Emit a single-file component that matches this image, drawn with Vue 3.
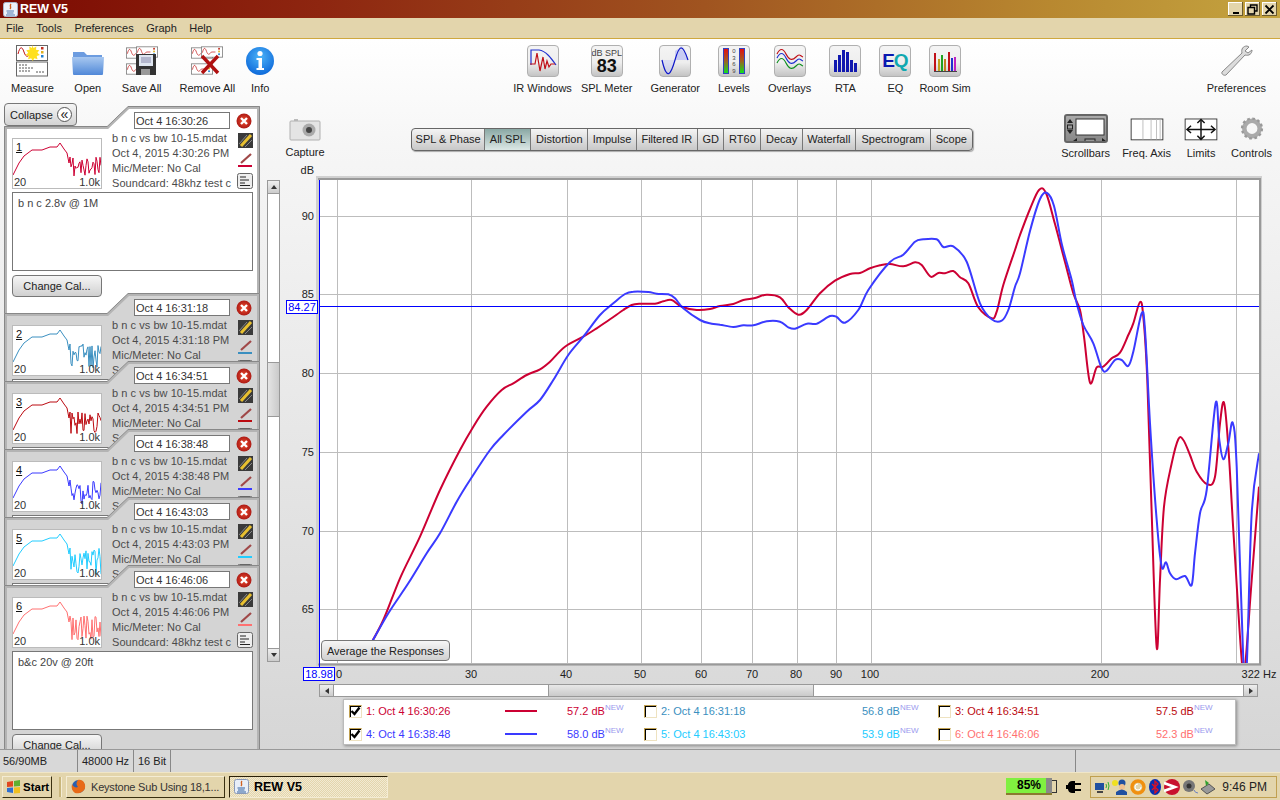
<template>
  <div class="app">
    <svg class="defs" width="0" height="0">
      <defs>
        <radialGradient id="infoBlue" cx="0.5" cy="0.35" r="0.7">
          <stop offset="0" stop-color="#4cb4f8" />
          <stop offset="1" stop-color="#0a64d8" />
        </radialGradient>
        <radialGradient id="closeRed" cx="0.5" cy="0.5" r="0.6">
          <stop offset="0" stop-color="#f05030" />
          <stop offset="1" stop-color="#a01010" />
        </radialGradient>
        <linearGradient id="folderBlue" x1="0" y1="0" x2="0" y2="1">
          <stop offset="0" stop-color="#a8c8f0" />
          <stop offset="1" stop-color="#5088d8" />
        </linearGradient>
        <symbol id="sheet" viewBox="0 0 32 16">
          <rect x="0.5" y="0.5" width="31" height="15" fill="#fff" stroke="#666" />
          <path d="M2 9 C4 1 6 1 8 7 S12 12 15 8 L21 8" fill="none" stroke="#c01010" />
          <rect x="25" y="2" width="2.5" height="2.5" fill="#c03020" />
          <rect x="25" y="6" width="2.5" height="2.5" fill="#e0b020" />
          <rect x="25" y="10" width="2.5" height="2.5" fill="#2080d0" />
        </symbol>
      </defs>
    </svg>

    <div class="titlebar">
      <svg class="java" width="15" height="15" viewBox="0 0 15 15">
        <rect x="0.5" y="0.5" width="14" height="14" rx="2" fill="#eef2fa" stroke="#a8b4cc" />
        <path d="M8 2 C6 4 9 5 7 7" fill="none" stroke="#d06020" stroke-width="1.4" />
        <path d="M3.5 9 H11 M4 11 H10.5 M3 13 H12" stroke="#5078b0" />
      </svg>
      <span class="app-name">REW V5</span>
      <div class="win-btns">
        <span class="win-btn"><i class="w-min"></i></span>
        <span class="win-btn">
          <svg width="11" height="11" viewBox="0 0 11 11"><path d="M3.5 3V1H10V7H8M1 3.5H7.5V10H1Z" fill="none" stroke="#000" stroke-width="1.4" /></svg>
        </span>
        <span class="win-btn">
          <svg width="11" height="11" viewBox="0 0 11 11"><path d="M1.5 1.5L9.5 9.5M9.5 1.5L1.5 9.5" stroke="#000" stroke-width="1.8" /></svg>
        </span>
      </div>
    </div>

    <div class="menubar">
      <span v-for="m in menus" :key="m">{{ m }}</span>
    </div>

    <div class="workspace">
      <div class="toolbar">
        <div class="tool-group left-tools">
          <div class="tool">
            <svg width="32" height="32" viewBox="0 0 32 32">
              <use href="#sheet" x="0" y="0" width="32" height="16" />
              <rect x="0.5" y="17" width="31" height="14" fill="#fff" stroke="#666" />
              <path d="M3 20H12M3 23H17M3 26H14M20 27H28" stroke="#555" stroke-dasharray="2 1" />
              <path d="M16 -1l1.6 3.2 3-1.6-.4 3.5 3.5.4-2 2.8 2.6 2.3-3.3 1 .8 3.4-3.3-1-1.7 3-1.7-3-3.3 1 .8-3.4-3.3-1 2.6-2.3-2-2.8 3.5-.4-.4-3.5 3 1.6z" fill="#ffe020" transform="translate(1 1) scale(.94)" />
            </svg>
            <span>Measure</span>
          </div>
          <div class="tool">
            <svg width="32" height="32" viewBox="0 0 32 32">
              <path d="M1 7 H12 L15 10 H30 V14 H1Z" fill="#6c9ce0" />
              <path d="M0 12 H32 L31 29 Q31 30 30 30 H2 Q1 30 1 29Z" fill="url(#folderBlue)" />
            </svg>
            <span>Open</span>
          </div>
          <div class="tool">
            <svg width="32" height="32" viewBox="0 0 32 32">
              <use href="#sheet" x="0" y="1" width="22" height="14" />
              <use href="#sheet" x="0" y="17" width="22" height="14" />
              <use href="#sheet" x="10" y="0" width="22" height="14" />
              <rect x="10" y="9" width="20" height="21" fill="#333" />
              <rect x="13" y="10" width="14" height="11" fill="#dfe6f0" />
              <path d="M15 13H25M15 15H25M15 17H25" stroke="#88a" />
              <rect x="15" y="24" width="9" height="6" fill="#999" />
            </svg>
            <span>Save All</span>
          </div>
          <div class="tool">
            <svg width="32" height="32" viewBox="0 0 32 32">
              <use href="#sheet" x="0" y="1" width="22" height="14" />
              <use href="#sheet" x="0" y="17" width="22" height="14" />
              <use href="#sheet" x="10" y="0" width="22" height="14" />
              <path d="M11 11L27 28M27 11L11 28" stroke="#b01010" stroke-width="3.4" />
            </svg>
            <span>Remove All</span>
          </div>
          <div class="tool info-tool">
            <svg width="32" height="32" viewBox="0 0 32 32">
              <circle cx="16" cy="16" r="14" fill="url(#infoBlue)" />
              <circle cx="16" cy="8.5" r="2.6" fill="#fff" />
              <path d="M12.5 13H18V23H20V25H12.5V23H14.5V15H12.5Z" fill="#fff" />
            </svg>
            <span>Info</span>
          </div>
        </div>

        <div class="tool-group center-tools">
          <div class="tool">
            <div class="icon-btn">
              <svg width="32" height="32" viewBox="0 0 32 32">
                <path d="M4 20V5H12C19 6 24 13 29 20" fill="none" stroke="#2030d0" stroke-width="1.2" />
                <path d="M3 19H8L10 8L13 26L16 12L18 24L20 16L22 22L24 19H28" fill="none" stroke="#c01018" stroke-width="1.2" />
              </svg>
            </div>
            <span>IR Windows</span>
          </div>
          <div class="tool spl-tool">
            <div class="icon-btn spl-btn">
              <span class="spl-unit">dB SPL</span>
              <span class="spl-val">83</span>
            </div>
            <span>SPL Meter</span>
          </div>
          <div class="tool">
            <div class="icon-btn">
              <svg width="32" height="32" viewBox="0 0 32 32">
                <path d="M3 15H16V6C20 3 24 3 29 15Z" fill="#c8ccf4" />
                <path d="M3 15C6 38 12 32 16 15S24 -5 29 15" fill="#c8ccf4" fill-opacity="0.5" />
                <path d="M3 15C8 37 12 29 16 15S23 -3 29 15" fill="none" stroke="#1018c8" stroke-width="1.2" />
              </svg>
            </div>
            <span>Generator</span>
          </div>
          <div class="tool">
            <div class="icon-btn levels-btn">
              <i class="lv-bar"></i>
              <span class="lv-scale"><b>0</b><b>3</b><b>6</b><b>9</b></span>
              <i class="lv-bar"></i>
            </div>
            <span>Levels</span>
          </div>
          <div class="tool">
            <div class="icon-btn">
              <svg width="32" height="32" viewBox="0 0 32 32">
                <path d="M3 9C6 3 9 3 12 9S18 16 22 12 26 11 29 12" fill="none" stroke="#c01018" stroke-width="1.2" />
                <path d="M3 13C6 7 9 7 12 13S18 20 22 16 26 15 29 16" fill="none" stroke="#2030d0" stroke-width="1.2" />
                <path d="M3 18C6 12 9 12 12 18S18 25 22 21 26 20 29 21" fill="none" stroke="#109020" stroke-width="1.2" />
              </svg>
            </div>
            <span>Overlays</span>
          </div>
          <div class="tool">
            <div class="icon-btn">
              <svg width="32" height="32" viewBox="0 0 32 32" fill="#1018b0">
                <rect x="5" y="15" width="3" height="12" />
                <rect x="9" y="10" width="3" height="17" />
                <rect x="13" y="5" width="3" height="22" />
                <rect x="17" y="7" width="3" height="20" />
                <rect x="21" y="15" width="3" height="12" />
                <rect x="25" y="18" width="3" height="9" />
              </svg>
            </div>
            <span>RTA</span>
          </div>
          <div class="tool">
            <div class="icon-btn eq-btn">
              <span class="eq-e">E</span><span class="eq-q">Q</span>
            </div>
            <span>EQ</span>
          </div>
          <div class="tool room-tool">
            <div class="icon-btn">
              <svg width="32" height="32" viewBox="0 0 32 32">
                <path d="M5 26.5H28" stroke="#444" stroke-width="1.2" />
                <rect x="5" y="8" width="2" height="18" fill="#c01018" />
                <rect x="9" y="14" width="2" height="12" fill="#c0a020" />
                <rect x="12" y="10" width="2" height="16" fill="#20a020" />
                <rect x="15" y="14" width="2" height="12" fill="#c08020" />
                <rect x="19" y="7" width="2" height="19" fill="#c01018" />
                <rect x="22" y="13" width="2" height="13" fill="#2030d0" />
                <rect x="25" y="12" width="2" height="14" fill="#c020c0" />
              </svg>
            </div>
            <span>Room Sim</span>
          </div>
        </div>

        <div class="tool-group right-tools">
          <div class="tool">
            <svg width="36" height="32" viewBox="0 0 36 32">
              <path d="M29 1C25 1 23 4 24 8L4 27C3 29 6 31 8 30L27 10C31 11 34 9 34 5L30 8L27 6L31 2Z" fill="#dcdcdc" stroke="#888" />
            </svg>
            <span>Preferences</span>
          </div>
        </div>
      </div>

      <div class="body-row">
        <div class="side">
          <button class="collapse-btn">Collapse <i class="chevs">«</i></button>
          <div
            v-for="c in cards"
            :key="c.n"
            class="card"
            :class="{ selected: c.n === 1, last: c.n === 6 }"
          >
            <svg class="card-edge" width="256" height="209" viewBox="0 0 256 209">
              <path d="M1.5 209V21.5H103.5L124.5 1.5H254.5V209" fill="none" stroke="#b4b4b4" stroke-width="3" />
              <path d="M0.5 209V20.5H103L124 0.5H255.5V209" fill="none" stroke="#888" />
            </svg>
            <div class="card-top">
              <input class="stamp" :value="c.stamp" readonly />
              <svg width="16" height="16" viewBox="0 0 16 16">
                <circle cx="8" cy="8" r="7.5" fill="url(#closeRed)" />
                <path d="M5 5L11 11M11 5L5 11" stroke="#fff" stroke-width="2.4" />
              </svg>
            </div>
            <div class="card-main">
              <div class="thumb">
                <svg width="88" height="49" viewBox="0 0 88 49">
                  <polyline :points="c.spark" fill="none" :stroke="c.color" />
                </svg>
                <u class="thumb-num">{{ c.n }}</u>
                <span class="thumb-lo">20</span>
                <span class="thumb-hi">1.0k</span>
              </div>
              <div class="meta">
                <div>b n c vs bw 10-15.mdat</div>
                <div>{{ c.date }}</div>
                <div>Mic/Meter: No Cal</div>
                <div>Soundcard: 48khz test c</div>
              </div>
              <div class="card-icons">
                <svg width="15" height="15" viewBox="0 0 15 15">
                  <rect width="15" height="15" fill="#3a3a3a" />
                  <path d="M3 13L13 2" stroke="#e8c030" stroke-width="3" />
                  <path d="M1 11L9 2M7 14L14 7" stroke="#888" />
                </svg>
                <svg width="15" height="15" viewBox="0 0 15 15">
                  <path d="M3 10L13 1" stroke="#a04848" stroke-width="2.2" />
                  <rect x="0" y="12" width="14" height="2" :fill="c.color" />
                </svg>
                <svg width="16" height="16" viewBox="0 0 16 16">
                  <rect x="0.5" y="0.5" width="15" height="15" rx="2" fill="#eee" stroke="#666" />
                  <path d="M3 4H9M3 7H12M3 10H8M3 12.5H13" stroke="#222" />
                </svg>
              </div>
            </div>
            <div class="notes">{{ c.note }}</div>
            <button class="gray-btn cal-btn">Change Cal...</button>
          </div>
        </div>

        <div class="vscroll">
          <span class="sb-btn"><i class="arrow up"></i></span>
          <div class="vtrack"><div class="vthumb"></div></div>
          <span class="sb-btn"><i class="arrow down"></i></span>
        </div>

        <div class="graph-col">
          <div class="graph-head">
            <div class="tool capture">
              <svg width="32" height="24" viewBox="0 0 32 24">
                <path d="M5 4H9V2H5Z" fill="#bbb" />
                <rect x="1" y="4" width="30" height="19" rx="1" fill="#e4e4e4" stroke="#b0b0b0" />
                <circle cx="20" cy="13" r="6.5" fill="#aaa" />
                <circle cx="20" cy="13" r="3" fill="#444" />
              </svg>
              <span>Capture</span>
            </div>
            <div class="tabs">
              <span v-for="t in tabs" :key="t" class="tab" :class="{ on: t === 'All SPL' }">{{ t }}</span>
            </div>
            <div class="graph-tools">
              <div class="tool">
                <div class="sb-icon">
                  <svg width="42" height="32" viewBox="0 0 42 32">
                    <rect x="11" y="4" width="28" height="16" fill="#fff" stroke="#333" />
                    <path d="M5 4L8 8H2ZM5 19L8 15H2ZM12 23L12 29L8 26ZM37 23L37 29L41 26Z" fill="#222" />
                    <rect x="2.5" y="10" width="5" height="4" fill="#999" stroke="#222" />
                    <rect x="20" y="24" width="10" height="4" fill="#999" stroke="#222" />
                  </svg>
                </div>
                <span>Scrollbars</span>
              </div>
              <div class="tool">
                <svg width="36" height="32" viewBox="0 0 36 32">
                  <rect x="0.5" y="5.5" width="35" height="23" fill="#fff" stroke="#333" />
                  <path d="M13.5 6V28M22.5 6V28M28.5 6V28M32.5 6V28" stroke="#bbb" />
                </svg>
                <span>Freq. Axis</span>
              </div>
              <div class="tool">
                <svg width="36" height="32" viewBox="0 0 36 32">
                  <rect x="0.5" y="5.5" width="35" height="23" fill="#fff" stroke="#333" />
                  <path d="M3 17H33M18 7V27" stroke="#111" stroke-width="1.6" />
                  <path d="M7 13L2.5 17L7 21M29 13L33.5 17L29 21M14 10L18 6L22 10M14 24L18 28L22 24" fill="none" stroke="#111" stroke-width="1.6" />
                </svg>
                <span>Limits</span>
              </div>
              <div class="tool">
                <svg width="24" height="32" viewBox="0 0 24 32">
                  <circle cx="12" cy="16" r="8.5" fill="none" stroke="#aaa" stroke-width="5" />
                  <circle cx="12" cy="16" r="11" fill="none" stroke="#999" stroke-width="2.5" stroke-dasharray="3 2.76" />
                </svg>
                <span>Controls</span>
              </div>
            </div>
          </div>

          <div class="chart-wrap">
            <svg class="chart" width="996" height="524" viewBox="284 160 996 524">
              <defs>
                <clipPath id="plotClip"><rect x="319" y="180" width="940" height="483" /></clipPath>
              </defs>
              <text x="314" y="174" text-anchor="end" class="ax">dB</text>
              <rect x="317.5" y="177.5" width="943" height="487" fill="none" stroke="#d0d0d0" stroke-width="3" />
              <path d="M318 179H1260V664" fill="none" stroke="#999" stroke-width="2" />
              <path d="M318 664.5H1261" fill="none" stroke="#999" stroke-width="2" />
              <rect x="319" y="180" width="940" height="483" fill="#fff" />
              <line v-for="x in vGrid" :key="'v' + x" :x1="x + 0.5" :x2="x + 0.5" y1="180" y2="663" stroke="#bdbdbd" />
              <line v-for="t in yTicks" :key="'h' + t.v" x1="319" x2="1259" :y1="t.y + 0.5" :y2="t.y + 0.5" stroke="#bdbdbd" />
              <text v-for="t in yTicks" :key="'l' + t.v" x="314" :y="t.y + 4" text-anchor="end" class="ax">{{ t.v }}</text>
              <text v-for="t in xTicks" :key="'x' + t.v" :x="t.x" y="678" text-anchor="middle" class="ax">{{ t.v }}</text>
              <g clip-path="url(#plotClip)">
                <path :d="redPath" fill="none" stroke="#cc0033" stroke-width="2" />
                <path :d="bluePath" fill="none" stroke="#3a3aff" stroke-width="2" />
              </g>
              <rect x="319" y="180" width="1" height="487" fill="#0000ff" />
              <rect x="319" y="306" width="940" height="1" fill="#0000ff" />
              <rect x="286.5" y="300.5" width="31" height="13" fill="#fff" stroke="#0000ff" />
              <text x="302" y="311" text-anchor="middle" class="ax cursor">84.27</text>
              <rect x="303.5" y="667.5" width="31" height="13" fill="#fff" stroke="#0000ff" />
              <text x="319" y="678" text-anchor="middle" class="ax cursor">18.98</text>
            </svg>
            <button class="gray-btn avg-btn">Average the Responses</button>
          </div>

          <div class="hscroll">
            <span class="sb-btn wide"><i class="arrow left"></i></span>
            <div class="htrack"><div class="hthumb"></div></div>
            <span class="sb-btn wide"><i class="arrow right"></i></span>
          </div>

          <div class="legend">
            <div v-for="l in legend" :key="l.n" class="leg-item" :style="{ color: l.color }">
              <span class="check" :class="{ on: l.on }">
                <svg v-if="l.on" width="11" height="10" viewBox="0 0 11 10">
                  <path d="M1.5 5L4.5 8L9.5 1.5" fill="none" stroke="#000" stroke-width="2.4" />
                </svg>
              </span>
              <span class="leg-name">{{ l.n }}: {{ l.stamp }}</span>
              <span class="leg-line" :style="{ background: l.on ? l.color : 'transparent' }"></span>
              <span class="leg-val">{{ l.db }} dB<sup>NEW</sup></span>
            </div>
          </div>
        </div>
      </div>
    </div>

    <div class="statusbar">
      <span class="st s1">56/90MB</span>
      <span class="st s2">48000 Hz</span>
      <span class="st s3">16 Bit</span>
      <span class="st s4"></span>
    </div>

    <div class="taskbar">
      <button class="start-btn">
        <svg width="15" height="14" viewBox="0 0 15 14">
          <path d="M1 2L7 1V6.5L1 7Z" fill="#e04820" />
          <path d="M8 1L14 0V6L8 6.5Z" fill="#60b030" />
          <path d="M1 8L7 7.5V13L1 12Z" fill="#3070d0" />
          <path d="M8 7.5L14 7V13L8 13.5Z" fill="#f0c020" />
        </svg>
        Start
      </button>
      <i class="task-sep"></i>
      <div class="task-btn ff">
        <svg width="15" height="15" viewBox="0 0 15 15">
          <circle cx="7.5" cy="7.5" r="6.5" fill="#2a60b0" />
          <path d="M7 1C12 0 15 5 14 9C13 13 8 15 4 14C1 12 0 9 1 5C2 8 5 9 7 8C5 6 5 3 7 1Z" fill="#e86a18" />
        </svg>
        <span class="ff-text">Keystone Sub Using 18,1...</span>
      </div>
      <div class="task-btn active">
        <svg width="15" height="15" viewBox="0 0 15 15">
          <rect x="0.5" y="0.5" width="14" height="14" rx="2" fill="#e8eef8" stroke="#8898b8" />
          <path d="M8 2C6 4 9 5 7 7" fill="none" stroke="#d06020" stroke-width="1.4" />
          <path d="M3.5 9H11M4 11H10.5M3 13H12" stroke="#3060a0" />
        </svg>
        REW V5
      </div>
      <div class="task-fill"></div>
      <div class="battery"><span class="bat-fill">85%</span><i class="bat-end"></i></div>
      <svg class="plug" width="16" height="14" viewBox="0 0 16 14">
        <path d="M6 1H9V13H6C3 13 2 10 2 9H0V5H2C2 4 3 1 6 1ZM9 3H15V5H9ZM9 9H15V11H9Z" fill="#000" />
      </svg>
      <div class="tray">
        <svg width="16" height="16" viewBox="0 0 16 16">
          <rect x="1" y="4" width="9" height="7" fill="#2050a0" />
          <rect x="3" y="12" width="6" height="2" fill="#444" />
          <path d="M12 5Q13 7 12 9M14 3Q16 7 14 11" fill="none" stroke="#30b030" />
        </svg>
        <svg width="16" height="16" viewBox="0 0 16 16">
          <circle cx="3" cy="4" r="3" fill="#f0e020" />
          <circle cx="10" cy="4" r="3.5" fill="#2050a0" />
          <circle cx="10" cy="8" r="3" fill="#f0c090" />
          <path d="M4 16V13Q10 8 15 13V16Z" fill="#2050a0" />
        </svg>
        <svg width="16" height="16" viewBox="0 0 16 16">
          <circle cx="8" cy="8" r="6" fill="none" stroke="#f09010" stroke-width="3.4" />
          <path d="M11 8A3 3 0 1 1 8 5" fill="none" stroke="#fff" />
        </svg>
        <svg width="14" height="16" viewBox="0 0 14 16">
          <ellipse cx="7" cy="8" rx="6" ry="8" fill="#0830b0" />
          <path d="M4 5L10 11L7 14V2L10 5L4 11" fill="none" stroke="#e01020" stroke-width="1.3" />
        </svg>
        <svg width="16" height="16" viewBox="0 0 16 16">
          <circle cx="8" cy="8" r="8" fill="#c8102e" />
          <path d="M0 4L11 8L0 12" fill="none" stroke="#fff" stroke-width="2.6" />
        </svg>
        <svg width="16" height="16" viewBox="0 0 16 16">
          <circle cx="7" cy="7" r="6" fill="#777" />
          <circle cx="7" cy="7" r="2.5" fill="#333" />
          <path d="M12 11Q13 14 16 14" fill="none" stroke="#6a80c0" />
        </svg>
        <svg width="16" height="16" viewBox="0 0 16 16">
          <path d="M1 10L9 5L15 10L7 15Z" fill="#999" stroke="#555" />
          <path d="M5 1L9 4L6 7Z" fill="#30a030" />
        </svg>
        <span class="clock">9:46 PM</span>
      </div>
    </div>
  </div>
</template>

<script setup>
const menus = ['File', 'Tools', 'Preferences', 'Graph', 'Help']
const tabs = ['SPL & Phase', 'All SPL', 'Distortion', 'Impulse', 'Filtered IR', 'GD', 'RT60', 'Decay', 'Waterfall', 'Spectrogram', 'Scope']

// rough shape of the small response plot, noise is added above 56
function spark(seed, wobble) {
  let s = seed
  const rnd = () => {
    s = (s * 16807) % 2147483647
    return s / 2147483647
  }
  const pts = [[0, 36], [6, 24], [11, 17], [19, 11], [29, 11], [37, 8], [44, 8], [47, 4], [51, 10], [54, 14], [56, 24]]
  for (let x = 57; x <= 88; x += 1) {
    pts.push([x, 18 + rnd() * wobble])
  }
  return pts.map((p) => p.join(',')).join(' ')
}

const cards = [
  { n: 1, stamp: 'Oct 4 16:30:26', date: 'Oct 4, 2015 4:30:26 PM', color: '#cc0033', note: 'b n c 2.8v @ 1M', spark: spark(11, 22) },
  { n: 2, stamp: 'Oct 4 16:31:18', date: 'Oct 4, 2015 4:31:18 PM', color: '#3a8fc0', note: '', spark: spark(29, 24) },
  { n: 3, stamp: 'Oct 4 16:34:51', date: 'Oct 4, 2015 4:34:51 PM', color: '#bb0a10', note: '', spark: spark(53, 22) },
  { n: 4, stamp: 'Oct 4 16:38:48', date: 'Oct 4, 2015 4:38:48 PM', color: '#3a3aff', note: '', spark: spark(71, 24) },
  { n: 5, stamp: 'Oct 4 16:43:03', date: 'Oct 4, 2015 4:43:03 PM', color: '#22ccff', note: '', spark: spark(97, 28) },
  { n: 6, stamp: 'Oct 4 16:46:06', date: 'Oct 4, 2015 4:46:06 PM', color: '#ff7070', note: 'b&c 20v @ 20ft', spark: spark(131, 24) },
]

const legend = [
  { n: 1, stamp: 'Oct 4 16:30:26', db: '57.2', color: '#cc0033', on: true },
  { n: 2, stamp: 'Oct 4 16:31:18', db: '56.8', color: '#3a8fc0', on: false },
  { n: 3, stamp: 'Oct 4 16:34:51', db: '57.5', color: '#bb0a10', on: false },
  { n: 4, stamp: 'Oct 4 16:38:48', db: '58.0', color: '#3a3aff', on: true },
  { n: 5, stamp: 'Oct 4 16:43:03', db: '53.9', color: '#22ccff', on: false },
  { n: 6, stamp: 'Oct 4 16:46:06', db: '52.3', color: '#ff7070', on: false },
]

const vGrid = [337, 471, 567, 641, 701, 752, 797, 836, 871, 1101, 1236]
const yTicks = [
  { v: 90, y: 216 },
  { v: 85, y: 294 },
  { v: 80, y: 373 },
  { v: 75, y: 452 },
  { v: 70, y: 531 },
  { v: 65, y: 609 },
]
const xTicks = [
  { v: '0', x: 339 },
  { v: '30', x: 471 },
  { v: '40', x: 566 },
  { v: '50', x: 640 },
  { v: '60', x: 701 },
  { v: '70', x: 752 },
  { v: '80', x: 796 },
  { v: '90', x: 836 },
  { v: '100', x: 870 },
  { v: '200', x: 1100 },
  { v: '322 Hz', x: 1259 },
]

// traced curve points, three stretches
const toScreen = (ox, oy, list) => list.map(([x, y]) => [ox + x / 3, oy + y / 3])

const red = [
  ...toScreen(320, 280, [[145, 1105], [190, 1020], [240, 895], [300, 770], [360, 630], [420, 510], [460, 440], [500, 380], [545, 330], [580, 310], [620, 285], [660, 268], [690, 245], [735, 200], [790, 170], [830, 145], [870, 118], [910, 90], [935, 75], [960, 71], [1005, 71], [1030, 64], [1055, 60], [1085, 80], [1130, 90], [1170, 87]]),
  ...toScreen(720, 170, [[0, 408], [40, 402], [70, 390], [105, 384], [140, 374], [180, 382], [205, 412], [235, 434], [260, 420], [300, 370], [345, 332], [390, 312], [420, 309], [450, 295], [480, 286], [510, 282], [550, 289], [585, 277], [605, 285], [632, 320], [655, 309], [675, 310], [700, 303], [720, 322], [745, 340], [775, 412], [815, 445], [830, 425], [850, 345], [885, 240], [900, 195]]),
  [1030, 209], [1039, 190], [1046, 193], [1055, 224], [1065, 262],
  ...toScreen(1060, 280, [[40, 40], [60, 90], [72, 170], [90, 308], [110, 262], [130, 260], [155, 235], [180, 218], [205, 165], [220, 130], [240, 66], [250, 110], [262, 300], [275, 700], [290, 1103], [300, 900], [312, 680], [335, 550], [355, 478], [370, 480], [390, 525], [410, 575], [442, 613], [465, 590], [480, 430], [492, 368], [505, 500], [520, 750], [545, 1140], [555, 1160], [575, 900], [597, 620]]),
]

const blue = [
  ...toScreen(320, 280, [[145, 1105], [205, 1000], [265, 910], [320, 820], [360, 760], [410, 665], [450, 600], [510, 510], [550, 465], [620, 395], [660, 360], [700, 300], [745, 225], [790, 170], [840, 105], [880, 70], [915, 42], [940, 35], [985, 36], [1010, 41], [1045, 43], [1065, 55], [1090, 85], [1140, 120], [1175, 131]]),
  ...toScreen(720, 170, [[0, 464], [40, 471], [70, 466], [100, 466], [140, 454], [180, 455], [205, 472], [225, 476], [260, 461], [290, 461], [330, 438], [350, 441], [375, 458], [415, 420], [445, 360], [510, 276], [550, 254], [585, 215], [610, 208], [650, 208], [670, 231], [700, 229], [740, 275], [780, 400], [815, 448], [845, 452], [865, 420], [885, 350], [900, 310]]),
  [1030, 231], [1040, 199], [1047, 193], [1054, 206], [1062, 245],
  ...toScreen(1060, 280, [[35, 0], [50, 70], [70, 135], [100, 190], [125, 265], [140, 272], [165, 240], [185, 240], [205, 258], [220, 215], [245, 100], [255, 150], [270, 430], [290, 720], [305, 860], [318, 847], [330, 880], [348, 898], [375, 888], [395, 915], [405, 820], [420, 700], [440, 630], [467, 368], [478, 480], [490, 538], [505, 490], [518, 428], [530, 560], [550, 1140], [560, 1160], [575, 700], [597, 520]]),
]

// catmull-rom through the points
function smooth(pts) {
  let d = `M${pts[0][0]} ${pts[0][1]}`
  for (let i = 0; i < pts.length - 1; i++) {
    const p0 = pts[i - 1] || pts[i]
    const p1 = pts[i]
    const p2 = pts[i + 1]
    const p3 = pts[i + 2] || p2
    const c1x = p1[0] + (p2[0] - p0[0]) / 6
    const c1y = p1[1] + (p2[1] - p0[1]) / 6
    const c2x = p2[0] - (p3[0] - p1[0]) / 6
    const c2y = p2[1] - (p3[1] - p1[1]) / 6
    d += `C${c1x.toFixed(1)} ${c1y.toFixed(1)} ${c2x.toFixed(1)} ${c2y.toFixed(1)} ${p2[0].toFixed(1)} ${p2[1].toFixed(1)}`
  }
  return d
}

const redPath = smooth(red)
const bluePath = smooth(blue)
</script>

<style>
html, body { margin: 0; overflow: hidden; background: #fff; }
</style>

<style scoped>
.app {
  width: 1280px;
  height: 800px;
  display: flex;
  flex-direction: column;
  overflow: hidden;
  font: 11px "Liberation Sans", Arial, sans-serif;
  color: #222;
}
.defs { position: absolute; }

.titlebar {
  height: 18px;
  flex: none;
  display: flex;
  align-items: center;
  background: linear-gradient(90deg, #7c0a02 0%, #8e2610 25%, #a05420 55%, #b88830 82%, #c4a440 100%);
}
.java { margin: 0 2px 0 3px; }
.app-name { color: #fff; font-weight: bold; font-size: 12.5px; }
.win-btns { margin-left: auto; margin-right: 3px; display: flex; gap: 2px; }
.win-btn {
  width: 15px;
  height: 14px;
  background: #e3d5ac;
  box-shadow: inset -1px -1px #6a5a30, inset 1px 1px #fff;
  display: flex;
  align-items: center;
  justify-content: center;
  position: relative;
}
.w-min { width: 6px; height: 2px; background: #000; margin-top: 7px; }

.menubar {
  height: 21px;
  flex: none;
  box-sizing: border-box;
  background: #e3d5ac;
  border-bottom: 1px solid #cfa83e;
  padding-left: 6px;
  display: flex;
  align-items: center;
  gap: 12.5px;
  color: #222;
}

.workspace {
  flex: 1;
  min-height: 0;
  display: flex;
  flex-direction: column;
  background: linear-gradient(180deg, #fff 0%, #f6f6f6 15%, #d6d6d6 100%);
}

.toolbar {
  height: 64px;
  flex: none;
  display: flex;
  padding-top: 6px;
  box-sizing: border-box;
}
.tool-group { display: flex; }
.tool {
  display: flex;
  flex-direction: column;
  align-items: center;
  gap: 5px;
  white-space: nowrap;
  color: #222;
}
.tool > span { line-height: 13px; }
.left-tools { margin-left: 11px; gap: 18px; }
.info-tool { margin-left: -9px; }
.center-tools { margin-left: 237px; gap: 18px; }
.spl-tool { margin-left: -9px; }
.room-tool { margin-left: -10px; }
.right-tools { margin-left: auto; margin-right: 14px; }

.icon-btn {
  width: 32px;
  height: 32px;
  box-sizing: border-box;
  border: 1px solid #b0b0b0;
  border-radius: 4px;
  background: linear-gradient(180deg, #f4f4f4 0%, #eee 55%, #c4c4c4 100%);
  position: relative;
  overflow: hidden;
}
.icon-btn svg { position: absolute; left: -1px; top: -1px; }
.spl-btn { display: flex; flex-direction: column; align-items: center; }
.spl-unit { font-size: 9px; line-height: 10px; color: #444; margin-top: 2px; }
.spl-val { font-size: 18px; line-height: 17px; font-weight: bold; color: #111; }
.levels-btn { display: flex; justify-content: center; gap: 3px; padding-top: 2px; }
.lv-bar { width: 6px; height: 26px; background: linear-gradient(180deg, #e01010, #a06020 50%, #10e020); border: 1px solid #3040c0; box-sizing: border-box; }
.lv-scale { display: flex; flex-direction: column; font-size: 6px; line-height: 6.5px; color: #444; }
.lv-scale b { font-weight: normal; }
.eq-btn { display: flex; align-items: center; justify-content: center; font: bold 19px "Liberation Sans", sans-serif; }
.eq-e { color: #0a18b0; }
.eq-q { color: #10a8b0; margin-left: -1px; }

.body-row { flex: 1; min-height: 0; display: flex; }

.side {
  width: 260px;
  padding-left: 4px;
  box-sizing: border-box;
  overflow: hidden;
  flex: none;
}
.collapse-btn {
  height: 23px;
  width: 73px;
  box-sizing: border-box;
  margin: 0 0 -20px;
  display: flex;
  align-items: center;
  justify-content: space-between;
  padding: 0 4px 0 5px;
  font: 11px "Liberation Sans", sans-serif;
  color: #222;
  background: linear-gradient(180deg, #f4f4f4, #d4d4d4);
  border: 1px solid #777;
  border-radius: 4px;
  position: relative;
  z-index: 1;
}
.chevs {
  width: 15px;
  height: 15px;
  border: 1px solid #555;
  border-radius: 50%;
  font-style: normal;
  font-size: 14px;
  line-height: 12px;
  text-align: center;
  box-sizing: border-box;
  background: #fff;
}

.card {
  position: relative;
  width: 256px;
  height: 209px;
  box-sizing: border-box;
  background: #d4d4d4;
  margin-bottom: -141px;
  padding-top: 6px;
  clip-path: polygon(0 20px, 103px 20px, 124px 0, 256px 0, 256px 100%, 0 100%);
}
.card.selected { background: #fff; margin-bottom: -22px; }
.card.last { margin-bottom: 0; height: 240px; }
.card-edge { position: absolute; left: 0; top: 0; }
.card-top { display: flex; align-items: center; gap: 6px; margin-left: 130px; position: relative; }
.stamp {
  width: 96px;
  height: 17px;
  box-sizing: border-box;
  border: 1px solid #777;
  background: #fff;
  padding: 0 1px;
  font: 11px "Liberation Sans", sans-serif;
  color: #333;
  outline: none;
}
.card-main { display: flex; margin: 9px 0 0 8px; height: 54px; position: relative; }
.thumb {
  width: 90px;
  height: 51px;
  box-sizing: border-box;
  border: 1px solid #bbb;
  background: #fff;
  position: relative;
  flex: none;
  font-size: 11px;
  color: #333;
}
.thumb svg { display: block; }
.thumb-num { position: absolute; left: 3px; top: 2px; line-height: 13px; color: #111; }
.thumb-lo { position: absolute; left: 1px; bottom: 0; line-height: 12px; }
.thumb-hi { position: absolute; right: 1px; bottom: 0; line-height: 12px; }
.meta { margin: -7px 0 0 10px; width: 125px; line-height: 15px; color: #4b4b4b; white-space: nowrap; letter-spacing: 0.05px; }
.card-icons { margin: -5px 0 0 0; display: flex; flex-direction: column; align-items: center; gap: 5px; width: 16px; }
.notes {
  width: 241px;
  height: 79px;
  box-sizing: border-box;
  margin: 0 0 0 8px;
  border: 1px solid #777;
  background: #fff;
  padding: 4px 5px;
  color: #444;
  position: relative;
}
.gray-btn {
  box-sizing: border-box;
  border: 1px solid #777;
  border-radius: 4px;
  background: linear-gradient(180deg, #f6f6f6, #d0d0d0);
  font: 11px "Liberation Sans", sans-serif;
  color: #222;
  padding: 0;
}
.cal-btn { width: 90px; height: 22px; margin: 4px 0 0 8px; display: block; position: relative; }

.vscroll {
  width: 13px;
  height: 482px;
  margin: 77px 0 0 7px;
  display: flex;
  flex-direction: column;
  flex: none;
}
.sb-btn {
  height: 14px;
  width: 13px;
  flex: none;
  box-sizing: border-box;
  border: 1px solid #999;
  background: linear-gradient(180deg, #eee, #ccc);
  display: flex;
  align-items: center;
  justify-content: center;
}
.sb-btn.wide { width: 15px; height: 13px; }
.arrow { width: 0; height: 0; border: 3px solid transparent; }
.arrow.up { border-bottom: 4px solid #333; border-top: 0; }
.arrow.down { border-top: 4px solid #333; border-bottom: 0; }
.arrow.left { border-right: 4px solid #333; border-left: 0; }
.arrow.right { border-left: 4px solid #333; border-right: 0; }
.vtrack { flex: 1; background: #fff; border-left: 1px solid #999; border-right: 1px solid #999; padding-top: 168px; }
.vthumb { height: 55px; background: linear-gradient(90deg, #e4e4e4, #cacaca); border-top: 1px solid #999; border-bottom: 1px solid #999; box-sizing: border-box; }

.graph-col { flex: 1; min-width: 0; margin-left: 4px; display: flex; flex-direction: column; }
.graph-head { height: 57px; flex: none; display: flex; position: relative; }
.capture { margin: 14px 0 0 3px; gap: 5px; width: 36px; }
.tabs {
  margin: 25px 0 0 88px;
  height: 23px;
  box-sizing: border-box;
  display: flex;
  border: 1px solid #666;
  border-radius: 4px;
  background: linear-gradient(180deg, #f4f4f4, #c8c8c8);
  box-shadow: 1px 1px 1px #aaa;
}
.tab {
  padding: 0 4.6px;
  line-height: 21px;
  border-right: 1px solid #777;
  color: #222;
  white-space: nowrap;
}
.tab:first-child { padding: 0 3.6px; }
.tab:nth-child(10) { padding: 0 5.6px; }
.tab:last-child { border-right: 0; }
.tab.on { background: linear-gradient(180deg, #8aa8a4, #dce8e6); }
.graph-tools { display: flex; margin: 11px 8px 0 auto; gap: 12px; }
.graph-tools .tool { gap: 4px; }
.sb-icon {
  width: 44px;
  height: 32px;
  box-sizing: border-box;
  border: 2px solid #666;
  border-radius: 3px;
  background: linear-gradient(180deg, #aaa, #888);
  overflow: hidden;
}
.sb-icon svg { display: block; margin: -1px 0 0 -1px; }

.chart-wrap { position: relative; height: 524px; flex: none; }
.chart { display: block; font: 11px "Liberation Sans", sans-serif; }
.ax { fill: #222; font-size: 11px; }
.cursor { fill: #0000ff; }
.avg-btn { position: absolute; left: 37px; top: 480px; width: 129px; height: 21px; }

.hscroll { height: 13px; width: 939px; margin-left: 35px; display: flex; flex: none; }
.htrack { flex: 1; background: #fff; border-top: 1px solid #999; border-bottom: 1px solid #999; padding-left: 214px; box-sizing: border-box; }
.hthumb { width: 266px; height: 100%; background: linear-gradient(180deg, #e8e8e8, #cacaca); border-left: 1px solid #999; border-right: 1px solid #999; box-sizing: border-box; }

.legend {
  margin: 3px 0 0 60px;
  width: 891px;
  height: 44px;
  box-sizing: border-box;
  background: #fff;
  box-shadow: 0 0 0 1px #bbb, 1px 1px 3px 1px #888;
  padding: 0 0 0 5px;
  display: grid;
  grid-template-columns: 295px 294px 290px;
  grid-auto-rows: 22px;
  row-gap: 1px;
}
.leg-item { display: flex; align-items: center; white-space: nowrap; }
.check {
  width: 13px;
  height: 13px;
  box-sizing: border-box;
  flex: none;
  border: 1px solid;
  border-color: #c0a050 #eee2c0 #eee2c0 #c0a050;
  box-shadow: inset 1px 1px #000;
  background: #fff;
  display: flex;
  align-items: center;
  justify-content: center;
}
.leg-name { margin-left: 4px; width: 139px; }
.leg-line { width: 32px; height: 2px; }
.leg-val { margin-left: 30px; }
.leg-val sup { font-size: 8px; color: #9a9aee; line-height: 0; vertical-align: 5px; }

.statusbar {
  height: 23px;
  flex: none;
  display: flex;
  box-sizing: border-box;
  background: #d8d8d8;
  border-top: 1px solid #999;
}
.st { border-right: 1px solid #888; line-height: 22px; padding-left: 3px; box-sizing: border-box; }
.s1 { width: 78px; }
.s2 { width: 56px; padding-left: 4px; }
.s3 { width: 37px; padding-left: 4px; }
.s4 { width: 905px; }

.taskbar {
  height: 28px;
  flex: none;
  box-sizing: border-box;
  background: #e3d5ac;
  border-top: 1px solid #f0e6c8;
  display: flex;
  align-items: center;
  padding: 0 3px 0 2px;
}
.start-btn {
  width: 50px;
  height: 22px;
  display: flex;
  align-items: center;
  gap: 2px;
  padding: 0 0 0 3px;
  box-sizing: border-box;
  background: #e3d5ac;
  border: 1px solid;
  border-color: #f4ecd4 #3a3010 #3a3010 #f4ecd4;
  font: bold 11.5px "Liberation Sans", sans-serif;
  color: #000;
}
.task-sep { width: 2px; height: 20px; margin: 0 5px 0 7px; background: #c9b67c; box-shadow: 1px 0 #f4ecd4; }
.task-btn {
  height: 22px;
  box-sizing: border-box;
  display: flex;
  align-items: center;
  gap: 5px;
  padding-left: 4px;
  border: 1px solid;
  border-color: #f4ecd4 #3a3010 #3a3010 #f4ecd4;
  white-space: nowrap;
}
.task-btn svg { flex: none; }
.ff { width: 159px; margin-right: 4px; font-size: 11px; letter-spacing: -0.2px; }
.ff-text { color: #333; }
.active {
  width: 159px;
  border-color: #2a2008 #f4ecd4 #f4ecd4 #2a2008;
  background: repeating-conic-gradient(#f2ead2 0 25%, #e3d5ac 0 50%) 0 0 / 2px 2px;
  font: bold 12.5px "Liberation Sans", sans-serif;
  color: #000;
}
.task-fill { flex: 1; }
.battery { display: flex; align-items: center; margin-right: 9px; }
.bat-fill {
  width: 46px;
  height: 17px;
  box-sizing: border-box;
  border-bottom: 2px solid #8a7a30;
  background: linear-gradient(90deg, #80f040 0 87%, #888 87%);
  font: bold 12px/15px "Liberation Sans", sans-serif;
  color: #000;
  text-align: center;
  padding-right: 0;
}
.bat-end { width: 4px; height: 11px; background: #e3d5ac; border: 1px solid #333; border-left: 0; }
.plug { margin-right: 8px; }
.tray {
  width: 187px;
  height: 22px;
  box-sizing: border-box;
  display: flex;
  align-items: center;
  gap: 2px;
  padding-left: 3px;
  border: 1px solid #c0a050;
}
.clock { margin-left: auto; margin-right: 9px; font-size: 12px; color: #222; }
</style>
